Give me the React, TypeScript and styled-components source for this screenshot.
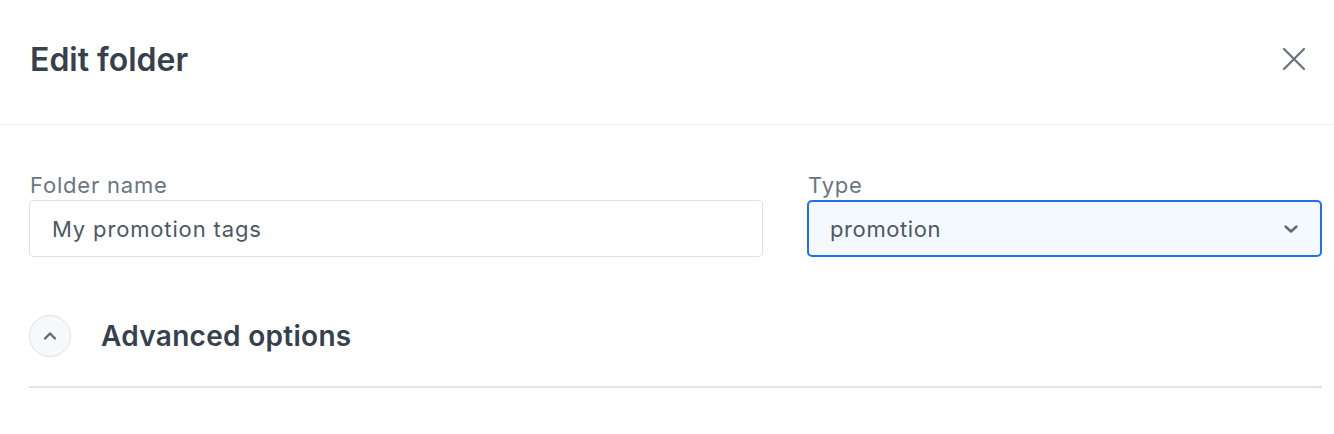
import React from 'react';
import styled, { createGlobalStyle } from 'styled-components';

const GlobalStyle = createGlobalStyle`
  html, body {
    margin: 0;
    padding: 0;
    background: #ffffff;
    font-family: Inter, "Noto Sans", "Liberation Sans", sans-serif;
    -webkit-font-smoothing: antialiased;
  }
  * {
    box-sizing: border-box;
  }
`;

const Modal = styled.div`
  width: 1334px;
  background: #ffffff;
`;

const Header = styled.header`
  height: 125px;
  display: flex;
  align-items: center;
  justify-content: space-between;
  padding: 0 26px 6px 30px;
  border-bottom: 1px solid #eff1f3;
`;

const Title = styled.h1`
  margin: 0;
  font-size: 32px;
  font-weight: 600;
  color: #36414d;
`;

const CloseButton = styled.button`
  width: 28px;
  height: 28px;
  padding: 0;
  border: none;
  background: transparent;
  display: flex;
  align-items: center;
  justify-content: center;
  cursor: pointer;
`;

const Body = styled.div`
  padding: 48px 12px 0 29px;
`;

const FieldsRow = styled.div`
  display: grid;
  grid-template-columns: 734px 1fr;
  column-gap: 44px;
`;

const Field = styled.label`
  display: flex;
  flex-direction: column;
`;

const Label = styled.span`
  font-size: 22px;
  line-height: 24px;
  letter-spacing: 0.8px;
  color: #6b7682;
  margin: 0 0 3px 1px;
`;

const TextInput = styled.input`
  height: 57px;
  width: 100%;
  border: 1px solid #dcdfe3;
  border-radius: 4px;
  padding: 0 22px;
  font-family: inherit;
  font-size: 22px;
  letter-spacing: 0.85px;
  color: #4d5864;
  background: #ffffff;
  outline: none;
`;

const SelectBox = styled.div<{ focused?: boolean }>`
  height: 57px;
  display: flex;
  align-items: center;
  justify-content: space-between;
  padding: 0 21px 0 21px;
  border: 2px solid ${(p) => (p.focused ? '#1e6ff2' : '#dcdfe3')};
  border-radius: 5px;
  background: ${(p) => (p.focused ? '#f4f8ff' : '#ffffff')};
  font-size: 22px;
  letter-spacing: 0.6px;
  color: #4d5864;
`;

const AdvancedRow = styled.div`
  display: flex;
  align-items: center;
  gap: 30px;
  margin-top: 58px;
  padding-bottom: 29px;
  border-bottom: 2px solid #e0e4e8;
`;

const ToggleCircle = styled.button`
  width: 42px;
  height: 42px;
  border-radius: 50%;
  border: 1px solid #dde1e6;
  background: #f7f8fa;
  display: flex;
  align-items: center;
  justify-content: center;
  padding: 0;
  cursor: pointer;
`;

const AdvancedTitle = styled.span`
  font-size: 28px;
  font-weight: 600;
  color: #36414d;
  letter-spacing: 0.3px;
`;

function Chevron({ up }: { up?: boolean }) {
  return (
    <svg width="16" height="16" viewBox="0 0 16 16" fill="none">
      <path
        d={up ? 'M3 10.5 L8 5.5 L13 10.5' : 'M2.5 5.5 L8 10.5 L13.5 5.5'}
        stroke="#5f6a75"
        strokeWidth="2.4"
        strokeLinecap="round"
        strokeLinejoin="round"
      />
    </svg>
  );
}

export default function App() {
  return (
    <>
      <GlobalStyle />
      <Modal>
        <Header>
          <Title>Edit folder</Title>
          <CloseButton aria-label="Close">
            <svg width="24" height="24" viewBox="0 0 24 24" fill="none">
              <path
                d="M2 2 L22 22 M22 2 L2 22"
                stroke="#67727e"
                strokeWidth="2.2"
                strokeLinecap="round"
              />
            </svg>
          </CloseButton>
        </Header>
        <Body>
          <FieldsRow>
            <Field>
              <Label>Folder name</Label>
              <TextInput defaultValue="My promotion tags" />
            </Field>
            <Field>
              <Label>Type</Label>
              <SelectBox focused>
                <span>promotion</span>
                <Chevron />
              </SelectBox>
            </Field>
          </FieldsRow>
          <AdvancedRow>
            <ToggleCircle aria-label="Toggle advanced options">
              <Chevron up />
            </ToggleCircle>
            <AdvancedTitle>Advanced options</AdvancedTitle>
          </AdvancedRow>
        </Body>
      </Modal>
    </>
  );
}
